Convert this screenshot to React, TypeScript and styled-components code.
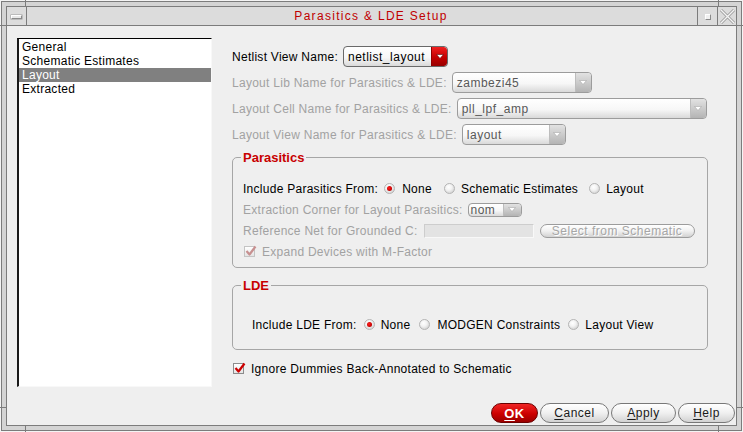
import styled, { createGlobalStyle } from "styled-components";

const GlobalStyle = createGlobalStyle`
  html, body {
    margin: 0;
    padding: 0;
    background: #d4d4d4;
  }
  body {
    font-family: "Liberation Sans", Arial, Helvetica, sans-serif;
    font-size: 12px;
    letter-spacing: 0.27px;
    color: #000;
  }
  * {
    box-sizing: border-box;
  }
`;

const Frame = styled.div`
  position: relative;
  width: 743px;
  height: 432px;
  padding: 5px;
  background: #d4d4d4;
  border: 1px solid #f4f4f4;
  box-shadow: inset 0 0 0 1px #7c7c7c;
`;

const Grip = styled.span<{ $x?: number; $y?: number; $vertical?: boolean; $bottom?: boolean; $right?: boolean }>`
  position: absolute;
  background: #7c7c7c;
  ${(p) =>
    p.$vertical
      ? `width: 1px; height: 6px; left: ${p.$x}px; ${p.$bottom ? "bottom: -1px;" : "top: -1px;"}`
      : `height: 1px; width: 6px; top: ${p.$y}px; ${p.$right ? "right: -1px;" : "left: -1px;"}`}
`;

const Inner = styled.div`
  display: flex;
  flex-direction: column;
  height: 100%;
  border: 1px solid #7c7c7c;
  background: #efefef;
`;

const TitleBar = styled.div`
  display: grid;
  grid-template-columns: 20px 1fr 20px 19px;
  height: 19px;
  background: #dcdcdc;
  border-bottom: 1px solid #7c7c7c;
`;

const BarButton = styled.div<{ $side: "left" | "right" }>`
  display: flex;
  align-items: center;
  justify-content: center;
  ${(p) => (p.$side === "left" ? "border-right: 1px solid #7c7c7c;" : "border-left: 1px solid #7c7c7c;")}
`;

const MinGlyph = styled.span`
  width: 11px;
  height: 4px;
  margin-top: 2px;
  background: #e8e8e8;
  border: 1px solid #8a8a8a;
  border-top-color: #fff;
  border-left-color: #fff;
  box-shadow: 0 0 0 0.5px #9a9a9a;
`;

const SquareGlyph = styled.span`
  width: 6px;
  height: 6px;
  margin-top: 2px;
  background: #f0f0f0;
  border: 1px solid #8a8a8a;
  border-top-color: #fff;
  border-left-color: #fff;
`;

const Title = styled.div`
  padding-left: 18px;
  text-align: center;
  line-height: 18px;
  color: #c00000;
  font-size: 12px;
  letter-spacing: 1.3px;
`;

const Content = styled.div`
  flex: 1;
  display: flex;
  flex-direction: column;
`;

const Main = styled.div`
  flex: 1;
  display: flex;
  gap: 20px;
  padding: 12px 0 0 10px;
`;

const List = styled.div`
  width: 195px;
  height: 349px;
  padding-top: 1px;
  background: #fff;
  border-top: 1px solid #000;
  border-left: 2px solid #1a1a1a;
  border-right: 1px solid #f8f8f8;
  border-bottom: 1px solid #f8f8f8;
`;

const ListItem = styled.div<{ $selected?: boolean }>`
  height: 14px;
  line-height: 14px;
  padding-left: 3px;
  background: ${(p) => (p.$selected ? "#808080" : "transparent")};
  color: ${(p) => (p.$selected ? "#fff" : "#000")};
`;

const Panel = styled.div`
  width: 476px;
  padding-top: 8px;
  display: flex;
  flex-direction: column;
`;

const FieldRow = styled.div<{ $h?: number; $gap?: number }>`
  display: flex;
  align-items: center;
  height: ${(p) => p.$h ?? 21}px;
  gap: ${(p) => p.$gap ?? 5}px;
  margin-bottom: 5px;
  white-space: nowrap;
`;

const Label = styled.span<{ $disabled?: boolean }>`
  color: ${(p) => (p.$disabled ? "#a2a2a2" : "#000")};
`;

const Combo = styled.div<{ $w: number; $h?: number; $disabled?: boolean }>`
  display: flex;
  width: ${(p) => p.$w}px;
  height: ${(p) => p.$h ?? 21}px;
  border: 1px solid ${(p) => (p.$disabled ? "#9c9c9c" : "#6a6a6a")};
  border-radius: 4px;
  background: linear-gradient(#ffffff, #f7f7f7 55%, #d9d9d9);
  overflow: hidden;
`;

const ComboText = styled.span<{ $disabled?: boolean; $small?: boolean }>`
  flex: 1;
  padding-left: ${(p) => (p.$small ? 2 : 4)}px;
  display: flex;
  align-items: center;
  color: ${(p) => (p.$disabled ? "#585858" : "#000")};
  font-size: 12px;
  letter-spacing: ${(p) => (p.$small ? 0.4 : 0.5)}px;
`;

const ComboArrow = styled.span<{ $accent?: boolean; $w?: number }>`
  width: ${(p) => p.$w ?? 16}px;
  display: flex;
  align-items: center;
  justify-content: center;
  border-radius: 0 3px 3px 0;
  background: ${(p) =>
    p.$accent
      ? "linear-gradient(#f02020, #c40000 55%, #980000)"
      : "linear-gradient(#e2e2e2, #c9c9c9 55%, #b4b4b4)"};
  border-left: 1px solid ${(p) => (p.$accent ? "#900000" : "#bdbdbd")};
`;

const Group = styled.fieldset<{ $pt: number; $pb: number; $mt?: number }>`
  margin: ${(p) => p.$mt ?? 0}px 0 0;
  min-width: 0;
  width: 476px;
  padding: ${(p) => `${p.$pt}px 8px ${p.$pb}px 0`};
  border: 1px solid #a6a6a6;
  border-radius: 5px;
`;

const Legend = styled.legend`
  margin-left: 8px;
  padding: 0 2px;
  color: #c80000;
  font-weight: bold;
  font-size: 13px;
  line-height: 15px;
  letter-spacing: 0;
`;

const GroupBody = styled.div<{ $pl: number }>`
  padding-left: ${(p) => p.$pl}px;
`;

const GroupRow = styled.div<{ $gap?: number }>`
  display: flex;
  align-items: center;
  height: 21px;
  gap: ${(p) => p.$gap ?? 0}px;
  white-space: nowrap;
`;

const RadioItem = styled.span<{ $gap: number; $ml: number }>`
  display: inline-flex;
  align-items: center;
  gap: ${(p) => p.$gap}px;
  margin-left: ${(p) => p.$ml}px;
`;

const Radio = styled.span<{ $checked?: boolean }>`
  width: 11px;
  height: 11px;
  border-radius: 50%;
  border: 1px solid #b4b4b4;
  background: radial-gradient(circle at 40% 35%, #ffffff 0%, #f2f2f2 40%, #c4c4c4 100%);
  display: inline-flex;
  align-items: center;
  justify-content: center;
  &::after {
    content: "";
    display: ${(p) => (p.$checked ? "block" : "none")};
    width: 5px;
    height: 5px;
    border-radius: 50%;
    background: radial-gradient(circle at 40% 40%, #ff2020, #c00000 70%, #800000);
  }
`;

const CheckRow = styled.div<{ $gap: number; $mt?: number; $pl?: number }>`
  display: flex;
  align-items: center;
  gap: ${(p) => p.$gap}px;
  height: 21px;
  margin-top: ${(p) => p.$mt ?? 0}px;
  padding-left: ${(p) => p.$pl ?? 0}px;
`;

const CheckBox = styled.span<{ $disabled?: boolean }>`
  position: relative;
  width: 11px;
  height: 11px;
  border: 1px solid ${(p) => (p.$disabled ? "#c4c4c4" : "#8c8c8c")};
  background: linear-gradient(#ffffff, #e4e4e4);
  & svg {
    position: absolute;
    left: 0;
    top: -2px;
  }
`;

const TextField = styled.span<{ $w: number }>`
  width: ${(p) => p.$w}px;
  height: 14px;
  background: #e3e3e3;
  border: 1px solid #cdcdcd;
  border-bottom-color: #f8f8f8;
  border-right-color: #f8f8f8;
`;

const PillButton = styled.button<{ $w: number; $h?: number; $primary?: boolean; $disabled?: boolean }>`
  width: ${(p) => p.$w}px;
  height: ${(p) => p.$h ?? 20}px;
  padding: 0;
  border-radius: 10px;
  border: 1px solid ${(p) => (p.$primary ? "#6a0000" : p.$disabled ? "#9c9c9c" : "#787878")};
  background: ${(p) =>
    p.$primary
      ? "linear-gradient(#f02424, #cc0000 55%, #9a0000)"
      : "linear-gradient(#ffffff, #f0f0f0 50%, #d2d2d2)"};
  color: ${(p) => (p.$primary ? "#fff" : p.$disabled ? "#a6a6a6" : "#1a1a1a")};
  font-family: "Liberation Sans", Arial, Helvetica, sans-serif;
  font-size: ${(p) => (p.$primary ? 13 : 12)}px;
  font-weight: ${(p) => (p.$primary ? "bold" : "normal")};
  letter-spacing: 0.5px;
  line-height: 1;
  text-shadow: ${(p) => (p.$disabled ? "1px 1px 0 #ffffff" : "none")};
  & u {
    text-underline-offset: 2px;
  }
`;

const ButtonBar = styled.div`
  display: flex;
  justify-content: flex-end;
  gap: 2px;
  padding: 0 1px 2px 0;
`;

const Arrow = ({ accent }: { accent?: boolean }) => (
  <svg width="8" height="5" viewBox="0 0 8 5">
    <path
      d="M0.5 0.5 L7.5 0.5 L4 4.5 Z"
      fill="#fff"
      stroke={accent ? "#600000" : "#a8a8a8"}
      strokeWidth="0.6"
    />
  </svg>
);

const Check = ({ disabled }: { disabled?: boolean }) => (
  <svg width="12" height="12" viewBox="0 0 12 12">
    <path
      d="M1.5 6 L4.5 9.5 L10.5 1.5"
      fill="none"
      stroke={disabled ? "#c79090" : "#cc0000"}
      strokeWidth="2.2"
      strokeLinejoin="round"
    />
  </svg>
);

const CloseGlyph = () => (
  <svg width="17" height="15" viewBox="0 0 17 15">
    <path d="M2 1 L15 14 M15 1 L2 14" stroke="#9a9a9a" strokeWidth="3" />
    <path d="M2 1 L15 14 M15 1 L2 14" stroke="#f4f4f4" strokeWidth="1.4" />
  </svg>
);

const items = ["General", "Schematic Estimates", "Layout", "Extracted"];

export default function App() {
  return (
    <>
      <GlobalStyle />
      <Frame>
        <Grip $vertical $x={24} />
        <Grip $vertical $x={717} />
        <Grip $vertical $bottom $x={24} />
        <Grip $vertical $bottom $x={717} />
        <Grip $y={24} />
        <Grip $y={406} />
        <Grip $right $y={24} />
        <Grip $right $y={406} />
        <Inner>
          <TitleBar>
            <BarButton $side="left">
              <MinGlyph />
            </BarButton>
            <Title>Parasitics &amp; LDE Setup</Title>
            <BarButton $side="right">
              <SquareGlyph />
            </BarButton>
            <BarButton $side="right">
              <CloseGlyph />
            </BarButton>
          </TitleBar>
          <Content>
            <Main>
              <List>
                {items.map((it) => (
                  <ListItem key={it} $selected={it === "Layout"}>
                    {it}
                  </ListItem>
                ))}
              </List>
              <Panel>
                <FieldRow>
                  <Label>Netlist View Name:</Label>
                  <Combo $w={105}>
                    <ComboText>netlist_layout</ComboText>
                    <ComboArrow $accent>
                      <Arrow accent />
                    </ComboArrow>
                  </Combo>
                </FieldRow>
                <FieldRow>
                  <Label $disabled>Layout Lib Name for Parasitics &amp; LDE:</Label>
                  <Combo $w={140} $disabled>
                    <ComboText $disabled>zambezi45</ComboText>
                    <ComboArrow>
                      <Arrow />
                    </ComboArrow>
                  </Combo>
                </FieldRow>
                <FieldRow>
                  <Label $disabled>Layout Cell Name for Parasitics &amp; LDE:</Label>
                  <Combo $w={250} $disabled>
                    <ComboText $disabled>pll_lpf_amp</ComboText>
                    <ComboArrow>
                      <Arrow />
                    </ComboArrow>
                  </Combo>
                </FieldRow>
                <FieldRow>
                  <Label $disabled>Layout View Name for Parasitics &amp; LDE:</Label>
                  <Combo $w={104} $disabled>
                    <ComboText $disabled>layout</ComboText>
                    <ComboArrow>
                      <Arrow />
                    </ComboArrow>
                  </Combo>
                </FieldRow>

                <Group $pt={13} $pb={5}>
                  <Legend>Parasitics</Legend>
                  <GroupBody $pl={10}>
                    <GroupRow>
                      <Label>Include Parasitics From:</Label>
                      <RadioItem $gap={7} $ml={6}>
                        <Radio $checked />
                        None
                      </RadioItem>
                      <RadioItem $gap={6} $ml={12}>
                        <Radio />
                        Schematic Estimates
                      </RadioItem>
                      <RadioItem $gap={6} $ml={11}>
                        <Radio />
                        Layout
                      </RadioItem>
                    </GroupRow>
                    <GroupRow $gap={5}>
                      <Label $disabled>Extraction Corner for Layout Parasitics:</Label>
                      <Combo $w={54} $h={14} $disabled>
                        <ComboText $disabled $small>
                          nom
                        </ComboText>
                        <ComboArrow $w={18}>
                          <Arrow />
                        </ComboArrow>
                      </Combo>
                    </GroupRow>
                    <GroupRow $gap={6}>
                      <Label $disabled>Reference Net for Grounded C:</Label>
                      <TextField $w={110} />
                      <PillButton $w={155} $h={14} $disabled>
                        Select from Schematic
                      </PillButton>
                    </GroupRow>
                    <CheckRow $gap={7} $pl={1}>
                      <CheckBox $disabled>
                        <Check disabled />
                      </CheckBox>
                      <Label $disabled>Expand Devices with M-Factor</Label>
                    </CheckRow>
                  </GroupBody>
                </Group>

                <Group $pt={21} $pb={14} $mt={10}>
                  <Legend>LDE</Legend>
                  <GroupBody $pl={19}>
                    <GroupRow>
                      <Label>Include LDE From:</Label>
                      <RadioItem $gap={6} $ml={7}>
                        <Radio $checked />
                        None
                      </RadioItem>
                      <RadioItem $gap={7} $ml={9}>
                        <Radio />
                        MODGEN Constraints
                      </RadioItem>
                      <RadioItem $gap={6} $ml={8}>
                        <Radio />
                        Layout View
                      </RadioItem>
                    </GroupRow>
                  </GroupBody>
                </Group>

                <CheckRow $gap={7} $mt={8} $pl={1}>
                  <CheckBox>
                    <Check />
                  </CheckBox>
                  <Label>Ignore Dummies Back-Annotated to Schematic</Label>
                </CheckRow>
              </Panel>
            </Main>
            <ButtonBar>
              <PillButton $w={47} $primary>
                <u>O</u>K
              </PillButton>
              <PillButton $w={69}>
                <u>C</u>ancel
              </PillButton>
              <PillButton $w={65}>
                <u>A</u>pply
              </PillButton>
              <PillButton $w={57}>
                <u>H</u>elp
              </PillButton>
            </ButtonBar>
          </Content>
        </Inner>
      </Frame>
    </>
  );
}
